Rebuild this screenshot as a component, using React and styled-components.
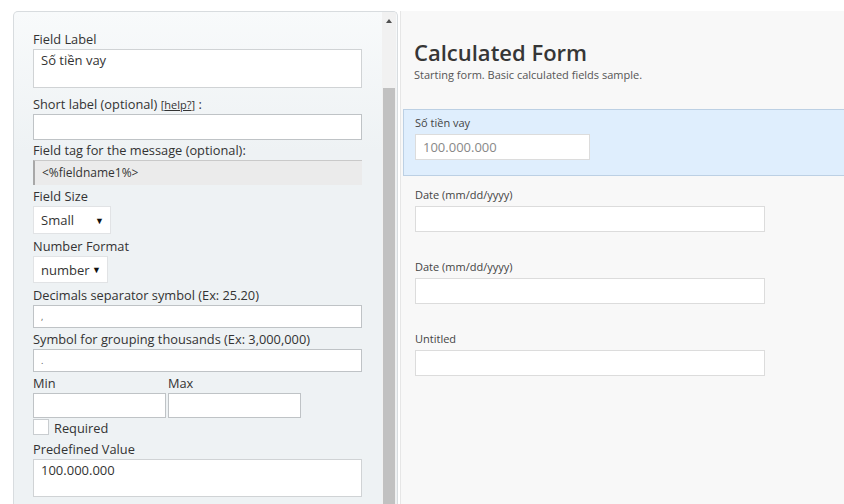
import React from 'react';
import styled, { createGlobalStyle } from 'styled-components';

const GlobalStyle = createGlobalStyle`
  html, body {
    margin: 0;
    padding: 0;
    background: #fff;
    overflow: hidden;
  }
  * { box-sizing: border-box; }
`;

const rightFields = [
  { label: 'Số tiền vay', value: '100.000.000', width: 175, active: true },
  { label: 'Date (mm/dd/yyyy)', value: '', width: 350 },
  { label: 'Date (mm/dd/yyyy)', value: '', width: 350 },
  { label: 'Untitled', value: '', width: 350 },
];

const App = () => {
  return (
    <>
      <GlobalStyle />
      <Page>
        <SettingsPanel>
          <SettingsBody>
            <Label>Field Label</Label>
            <TextArea height={39}>Số tiền vay</TextArea>

            <Label gap={6}>
              Short label (optional) <Help>[<u>help?</u>]</Help> :
            </Label>
            <TextInput height={26} />

            <Label>Field tag for the message (optional):</Label>
            <TagBox>&lt;%fieldname1%&gt;</TagBox>

            <Label gap={1}>Field Size</Label>
            <Select width={78} height={28}>
              Small <Caret>▼</Caret>
            </Select>

            <Label gap={2}>Number Format</Label>
            <Select width={75} height={27}>
              number <Caret>▼</Caret>
            </Select>

            <Label gap={2}>Decimals separator symbol (Ex: 25.20)</Label>
            <TextInput height={23} small>,</TextInput>

            <Label gap={1}>Symbol for grouping thousands (Ex: 3,000,000)</Label>
            <TextInput height={23} small>.</TextInput>

            <MinMaxRow>
              <MinMaxCol>
                <Label gap={1}>Min</Label>
                <TextInput height={25} />
              </MinMaxCol>
              <MinMaxCol>
                <Label gap={1}>Max</Label>
                <TextInput height={25} />
              </MinMaxCol>
            </MinMaxRow>

            <CheckRow>
              <CheckBox />
              <span>Required</span>
            </CheckRow>

            <Label gap={2}>Predefined Value</Label>
            <TextArea height={38}>100.000.000</TextArea>
          </SettingsBody>
          <ScrollBar>
            <ScrollArrow />
            <ScrollThumb />
          </ScrollBar>
        </SettingsPanel>

        <Preview>
          <Title>Calculated Form</Title>
          <Subtitle>Starting form. Basic calculated fields sample.</Subtitle>
          <FieldList>
            {rightFields.map((f, i) => (
              <Field key={i} active={f.active}>
                <FieldLabel>{f.label}</FieldLabel>
                <FieldInput style={{ width: f.width }}>{f.value}</FieldInput>
              </Field>
            ))}
          </FieldList>
        </Preview>
      </Page>
    </>
  );
};

const Page = styled.div`
  display: flex;
  height: 504px;
  padding: 11px 0 0 13px;
  font-family: 'Open Sans', 'Liberation Sans', sans-serif;
  color: #333;
`;

const SettingsPanel = styled.div`
  display: flex;
  width: 385px;
  flex-shrink: 0;
  border: 1px solid #d8dcdf;
  border-bottom: none;
  border-radius: 5px 5px 0 0;
  background: linear-gradient(#f8fafb, #eef2f4 140px);
  overflow: hidden;
`;

const SettingsBody = styled.div`
  flex: 1;
  display: flex;
  flex-direction: column;
  align-items: flex-start;
  padding: 17px 6px 0 19px;
  font-size: 12.8px;
`;

const Label = styled.div`
  line-height: 19px;
  padding-top: 1px;
  margin-top: ${(p) => p.gap || 0}px;
  color: #333;
  white-space: nowrap;
`;

const Help = styled.span`
  font-size: 11px;
`;

const TextArea = styled.div`
  width: 329px;
  height: ${(p) => p.height}px;
  background: #fff;
  border: 1px solid #d0d3d5;
  padding: 2px 7px;
  font-size: 13px;
  line-height: 17px;
  color: #333;
`;

const TextInput = styled.div`
  width: 100%;
  max-width: 329px;
  height: ${(p) => p.height}px;
  background: #fff;
  border: 1px solid #bfc3c6;
  padding: 0 7px;
  font-size: ${(p) => (p.small ? '9px' : '13px')};
  line-height: ${(p) => p.height - 2}px;
  color: #555;
`;

const TagBox = styled.div`
  width: 329px;
  height: 25px;
  background: #ebebeb;
  border-top: 1px solid #c9c9c9;
  border-left: 2px solid #a8a8a8;
  padding: 0 7px;
  font-size: 12px;
  line-height: 24px;
  color: #333;
`;

const Select = styled.div`
  display: flex;
  align-items: center;
  justify-content: space-between;
  width: ${(p) => p.width}px;
  height: ${(p) => p.height}px;
  background: #fff;
  border: 1px solid #e1e3e5;
  padding: 0 6px 0 7px;
  font-size: 13px;
  color: #333;
`;

const Caret = styled.span`
  font-size: 9px;
  color: #111;
`;

const MinMaxRow = styled.div`
  display: flex;
  gap: 2px;
`;

const MinMaxCol = styled.div`
  display: flex;
  flex-direction: column;
  width: 133px;
`;

const CheckRow = styled.div`
  display: flex;
  align-items: center;
  gap: 5px;
  height: 18px;
  line-height: 18px;
  margin-top: 1px;
`;

const CheckBox = styled.span`
  width: 16px;
  height: 16px;
  background: #fff;
  border: 1px solid #c9cdd0;
  align-self: flex-start;
`;

const ScrollBar = styled.div`
  position: relative;
  width: 14px;
  flex-shrink: 0;
  background: #f1f1f1;
  margin-right: 1px;
  display: flex;
  flex-direction: column;
`;

const ScrollArrow = styled.div`
  height: 76px;
  &::before {
    content: '';
    position: absolute;
    top: 7px;
    left: 4px;
    border-left: 3px solid transparent;
    border-right: 3px solid transparent;
    border-bottom: 4px solid #505050;
  }
`;

const ScrollThumb = styled.div`
  flex: 1;
  margin: 0 1px;
  background: #c1c1c1;
`;

const Preview = styled.div`
  flex: 1;
  margin-left: 2px;
  background: #f8f8f8;
  border-left: 1px solid #e6e6e6;
  padding: 26px 0 0 13px;
`;

const Title = styled.h1`
  margin: 0;
  font-size: 22px;
  font-weight: 600;
  line-height: 30px;
  color: #363636;
`;

const Subtitle = styled.div`
  font-size: 11px;
  line-height: 16px;
  color: #555;
`;

const FieldList = styled.div`
  margin: 26px 0 0 -11px;
  display: flex;
  flex-direction: column;
  gap: 5px;
`;

const Field = styled.div`
  padding: 5px 11px 15px;
  border: 1px solid ${(p) => (p.active ? '#bcd0e4' : 'transparent')};
  border-right: none;
  background: ${(p) => (p.active ? '#dfeefd' : 'transparent')};
`;

const FieldLabel = styled.div`
  font-size: 11px;
  line-height: 16px;
  color: #444;
  margin-bottom: 3px;
`;

const FieldInput = styled.div`
  height: 26px;
  background: #fff;
  border: 1px solid #dcdcdc;
  padding: 0 7px;
  font-size: 13px;
  line-height: 24px;
  color: #888;
`;

export default App;
